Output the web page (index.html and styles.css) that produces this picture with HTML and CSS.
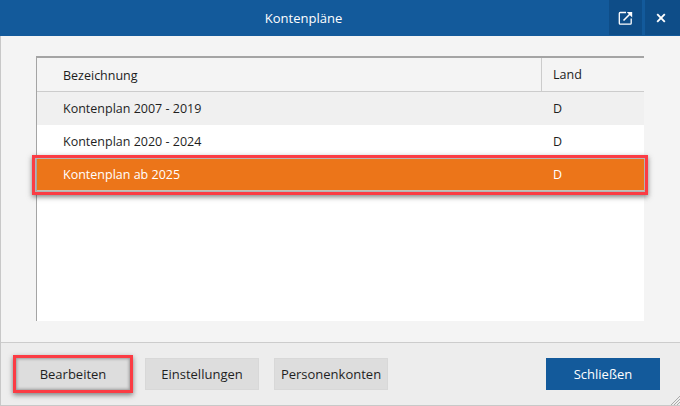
FILE: index.html
```html
<!DOCTYPE html>
<html lang="de">
<head>
<meta charset="utf-8">
<title>Kontenpläne</title>
<link rel="stylesheet" href="styles.css">
</head>
<body>
<div class="dialog">
  <header class="titlebar">
    <div class="title">Kontenpläne</div>
    <button class="winbtn winbtn-open" aria-label="Öffnen">
      <svg width="16" height="16" viewBox="0 0 16 16" fill="none" stroke="#fff" stroke-width="1.3">
        <path d="M8 2.5H2.2a.9.9 0 0 0-.9.9v9.9c0 .5.4.9.9.9h10.1c.5 0 .9-.4.9-.9V8.5"/>
        <path d="M5.5 10.5 13 3" stroke-width="1.6"/>
        <path d="M8.8 2h5.4v5.4z" fill="#fff" stroke="none"/>
      </svg>
    </button>
    <button class="winbtn winbtn-close" aria-label="Schließen">
      <svg width="10" height="10" viewBox="0 0 10 10" fill="none" stroke="#fff" stroke-width="1.9">
        <path d="M1.2 1.2 8.8 8.8M8.8 1.2 1.2 8.8"/>
      </svg>
    </button>
  </header>
  <main class="content">
    <div class="table">
      <div class="row head">
        <div class="cell name">Bezeichnung</div>
        <div class="cell land">Land</div>
      </div>
      <div class="row odd">
        <div class="cell name">Kontenplan 2007 - 2019</div>
        <div class="cell land">D</div>
      </div>
      <div class="row">
        <div class="cell name">Kontenplan 2020 - 2024</div>
        <div class="cell land">D</div>
      </div>
      <div class="row selected marked">
        <div class="cell name">Kontenplan ab 2025</div>
        <div class="cell land">D</div>
      </div>
    </div>
  </main>
  <footer class="footer">
    <button class="btn marked-btn">Bearbeiten</button>
    <button class="btn">Einstellungen</button>
    <button class="btn">Personenkonten</button>
    <button class="btn primary">Schließen</button>
    <svg class="grip" width="10" height="10" viewBox="0 0 10 10" stroke="#aaa" stroke-width="1">
      <path d="M10 1 1 10M10 4 4 10M10 7 7 10"/>
    </svg>
  </footer>
</div>
</body>
</html>
```
FILE: styles.css
```css
* { box-sizing: border-box; }
html, body { margin: 0; padding: 0; }
body {
  width: 680px;
  height: 406px;
  overflow: hidden;
  font-family: "Open Sans", "Noto Sans", sans-serif;
  font-size: 12.5px;
  color: #1f1f1f;
}
.dialog {
  width: 680px;
  height: 406px;
  display: flex;
  flex-direction: column;
  background: #f4f4f4;
  border-left: 1px solid #c8c8c8;
  border-bottom: 1px solid #c8c8c8;
  position: relative;
}
.titlebar {
  height: 36px;
  margin-left: -1px;
  flex: none;
  display: flex;
  align-items: stretch;
  background: #135a9b;
  color: #fff;
}
.title {
  flex: 1;
  text-align: center;
  line-height: 36px;
  font-size: 13px;
  font-weight: 500;
}
.winbtn {
  border: 0;
  padding: 0;
  margin: 0 0 1px 2px;
  width: 34px;
  height: 35px;
  background: #0e4d88;
  display: flex;
  align-items: center;
  justify-content: center;
}
.winbtn-open { width: 33px; margin-right: 1px; }
.winbtn-close { width: 35px; margin-right: 0; padding-right: 3px; }
.content {
  flex: 1;
  padding: 20px 36px 21px 35px;
  min-height: 0;
}
.table {
  height: 100%;
  background: #fff;
  border-top: 2px solid #a4a4a4;
  border-left: 1px solid #a4a4a4;
}
.row {
  display: flex;
  height: 33px;
  align-items: center;
  position: relative;
}
.row.head {
  height: 34px;
  background: #f4f4f4;
  border-bottom: 1px solid #cccccc;
  font-weight: 500;
  color: #1c1c1c;
}
.row.head .name { padding-top: 1px; }
.row.odd { background: #f0f0f0; }
.row.selected {
  background: #ec7519;
  color: #fff;
  border-top: 1px solid #a87a50;
  border-bottom: 1px solid #c9c0b6;
}
.marked::after {
  content: "";
  position: absolute;
  left: -5px;
  right: -4px;
  top: -4px;
  bottom: -5px;
  border: 3px solid #fb3c44;
  box-shadow: 0 2px 5px rgba(50, 50, 50, .6), inset 0 0 0 1px #b4b4b4;
  pointer-events: none;
}
.cell { height: 100%; display: flex; align-items: center; }
.name { width: 504px; padding-left: 26px; }
.land { flex: 1; padding-left: 12px; }
.head .land { border-left: 1px solid #cccccc; padding-left: 11px; }
.footer {
  flex: none;
  height: 63px;
  display: flex;
  align-items: flex-start;
  gap: 15px;
  padding: 15px 20px 0 15px;
  background: #ededed;
  border-top: 1px solid #cccccc;
  position: relative;
}
.btn {
  width: 114px;
  height: 32px;
  border: 1px solid #d8d8d8;
  background: #dddddd;
  font: inherit;
  font-size: 13px;
  font-weight: 500;
  color: #1f1f1f;
  padding: 0;
  position: relative;
}
.btn.primary {
  margin-left: auto;
  background: #135a9b;
  border-color: #135a9b;
  color: #fff;
}
.marked-btn::after {
  content: "";
  position: absolute;
  left: -4px;
  right: -4px;
  top: -4px;
  bottom: -4px;
  border: 3px solid #fb3c44;
  box-shadow: 0 2px 5px rgba(50, 50, 50, .6), inset 0 0 3px 1px #9c9c9c;
  pointer-events: none;
}
.grip { position: absolute; right: 0; bottom: 0; }
```
